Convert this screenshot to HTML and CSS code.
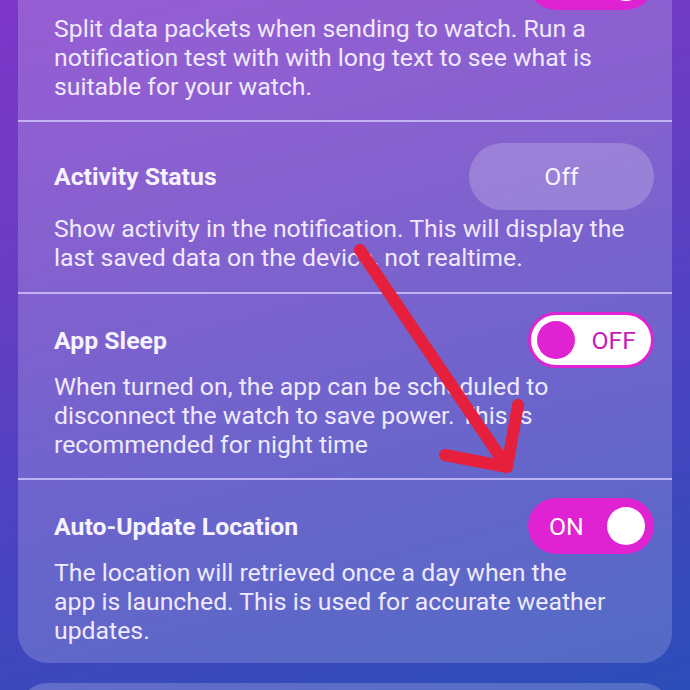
FILE: index.html
```html
<!DOCTYPE html>
<html lang="en">
<head>
<meta charset="utf-8">
<title>Settings</title>
<link rel="stylesheet" href="styles.css">
</head>
<body>
<main class="screen">
  <section class="card card-main">
    <div class="row">
      <div class="row-head">
        <span class="title"></span>
        <span class="toggle toggle-on"><span class="toggle-label"></span><span class="knob"></span></span>
      </div>
      <p class="desc">Split data packets when sending to watch. Run a<br>notification test with with long text to see what is<br>suitable for your watch.</p>
    </div>
    <div class="row row-pill">
      <div class="row-head">
        <span class="title">Activity Status</span>
        <span class="pill">Off</span>
      </div>
      <p class="desc">Show activity in the notification. This will display the<br>last saved data on the device, not realtime.</p>
    </div>
    <div class="row row-sleep">
      <div class="row-head">
        <span class="title">App Sleep</span>
        <span class="toggle toggle-off"><span class="knob"></span><span class="toggle-label">OFF</span></span>
      </div>
      <p class="desc">When turned on, the app can be scheduled to<br>disconnect the watch to save power. This is<br>recommended for night time</p>
    </div>
    <div class="row row-last">
      <div class="row-head">
        <span class="title">Auto-Update Location</span>
        <span class="toggle toggle-on"><span class="toggle-label">ON</span><span class="knob"></span></span>
      </div>
      <p class="desc">The location will retrieved once a day when the<br>app is launched. This is used for accurate weather<br>updates.</p>
    </div>
  </section>
  <section class="card card-next"></section>
</main>
<svg class="arrow" width="690" height="690" viewBox="0 0 690 690" aria-hidden="true">
  <path d="M360 250 L507 467" />
  <path d="M518 405 L507 467 L445 455" />
</svg>
</body>
</html>
```
FILE: styles.css
```css
html, body {
  margin: 0;
  padding: 0;
}
body {
  width: 690px;
  height: 690px;
  overflow: hidden;
  position: relative;
  font-family: Roboto, "Noto Sans", "Liberation Sans", sans-serif;
  color: #f3eeff;
  background: linear-gradient(165deg, #7e36c8 0%, #6a3cc4 30%, #4844c0 65%, #2c4eb8 100%);
}
.screen {
  padding: 0 18px;
  display: flex;
  flex-direction: column;
  gap: 20px;
}
.card {
  border-radius: 30px;
  background: linear-gradient(170deg, rgba(255,255,255,0.2), rgba(255,255,255,0.17));
  overflow: hidden;
}
.card-main {
  margin-top: -65px;
}
.row {
  padding: 19px 18px 19px 36px;
  display: flex;
  flex-direction: column;
  gap: 4px;
}
.row-pill {
  padding-top: 21px;
  padding-bottom: 20px;
}
.row-sleep {
  padding-top: 18px;
}
.row-last {
  padding-top: 18px;
  padding-bottom: 18px;
}
.row + .row {
  border-top: 2px solid rgba(215, 205, 255, 0.75);
}
.row-head {
  display: flex;
  align-items: center;
  justify-content: space-between;
}
.title {
  font-size: 24.8px;
  font-weight: 700;
  color: #f6f2ff;
}
.desc {
  margin: 0;
  font-size: 24.8px;
  line-height: 29px;
  color: #efe9ff;
  white-space: nowrap;
}
.pill {
  width: 185px;
  height: 67px;
  border-radius: 34px;
  background: rgba(255,255,255,0.2);
  display: flex;
  align-items: center;
  justify-content: center;
  font-size: 24.8px;
  color: #f6f2ff;
}
.toggle {
  box-sizing: border-box;
  width: 126px;
  height: 56px;
  border-radius: 28px;
  display: flex;
  align-items: center;
  font-size: 24.8px;
  padding: 0 9px 0 21px;
  justify-content: space-between;
}
.toggle-on {
  background: #df22d2;
  color: #ffffff;
}
.toggle-on .knob {
  width: 38px;
  height: 38px;
  border-radius: 50%;
  background: #ffffff;
}
.toggle-off {
  background: #ffffff;
  border: 3px solid #df22d2;
  color: #c21cb8;
  padding: 0 15px 0 6px;
}
.toggle-off .knob {
  width: 38px;
  height: 38px;
  border-radius: 50%;
  background: #df22d2;
}
.card-next {
  height: 80px;
}
.arrow {
  position: absolute;
  left: 0;
  top: 0;
  fill: none;
  stroke: #e61f3c;
  stroke-width: 12;
  stroke-linecap: round;
  stroke-linejoin: round;
}
```
